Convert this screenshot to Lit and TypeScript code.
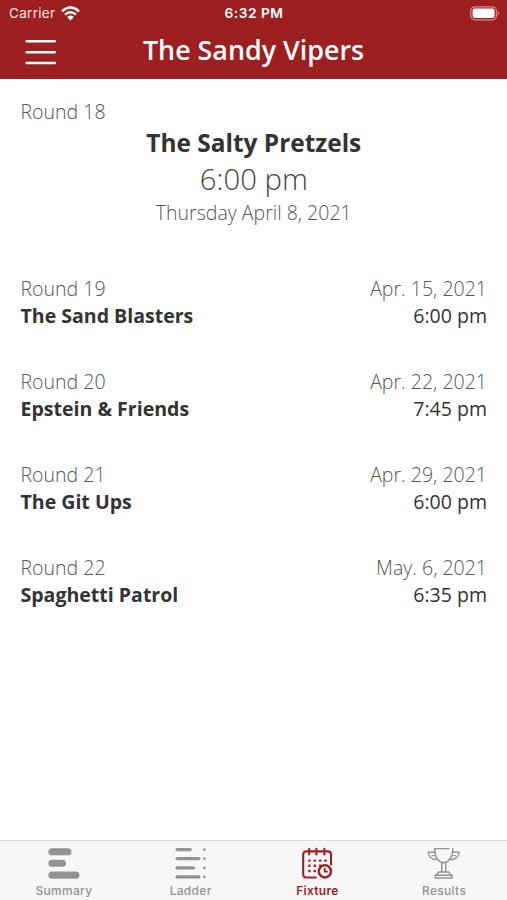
import { LitElement, html, css, svg } from "lit";
import { customElement } from "lit/decorators.js";

const fixtures = [
  { round: "Round 19", team: "The Sand Blasters", date: "Apr. 15, 2021", time: "6:00 pm" },
  { round: "Round 20", team: "Epstein & Friends", date: "Apr. 22, 2021", time: "7:45 pm" },
  { round: "Round 21", team: "The Git Ups", date: "Apr. 29, 2021", time: "6:00 pm" },
  { round: "Round 22", team: "Spaghetti Patrol", date: "May. 6, 2021", time: "6:35 pm" },
];

const tabs = [
  {
    label: "Summary",
    icon: svg`<g fill="currentColor">
      <rect x="5.4" y="4.2" width="23" height="7" rx="3.5"/>
      <rect x="5.4" y="15.7" width="17.5" height="7" rx="3.5"/>
      <rect x="5.4" y="27.5" width="31" height="7.2" rx="3.5"/></g>`,
  },
  {
    label: "Ladder",
    icon: svg`<g fill="none" stroke="currentColor" stroke-width="3.1" stroke-linecap="round">
      <path d="M7 5.6H20.3M7 14.6H29M7 23.9H23.6M7 32.9H29"/>
      <path stroke-width="2.7" d="M34.4 5.6h.01M34.4 14.6h.01M34.4 23.9h.01M34.4 32.9h.01"/></g>`,
  },
  {
    label: "Fixture",
    active: true,
    icon: svg`<g fill="none" stroke="currentColor" stroke-width="2.1" stroke-linecap="round" stroke-linejoin="round">
      <path d="M18.8 33.5H9.2Q6.2 33.5 6.2 30.5V10.4Q6.2 7.4 9.2 7.4H31Q34 7.4 34 10.4V20.4"/>
      <path d="M12.2 4.8V10.4M19.4 4.8V10.4M27.4 4.8V10.4"/>
      <circle cx="27.9" cy="27.4" r="6.1" stroke-width="2.5"/>
      <path stroke-width="1.8" d="M27.7 24.6V27.7H30.1"/></g>
      <g fill="currentColor">${[
        [11.2, 15.4], [16.6, 15.4], [22, 15.4], [27.4, 15.4],
        [11.2, 20.6], [16.6, 20.6], [22, 20.6],
        [11.2, 25.8], [16.6, 25.8],
      ].map(([x, y]) => svg`<rect x=${x} y=${y} width="2.4" height="2.4" rx=".5"/>`)}</g>`,
  },
  {
    label: "Results",
    icon: svg`<g transform="translate(-.7 0)" fill="none" stroke="currentColor" stroke-width="1.4" stroke-linecap="round" stroke-linejoin="round">
      <path d="M25.6 4.6H11.4Q11.2 17.4 20.3 18.8Q29.6 17.4 29.4 4.6"/>
      <path d="M11.3 8.3H4.9Q5.5 14.9 12.8 15.7M10.6 11.6H9M29.4 8.3H35.9Q35.3 14.9 28 15.7M30.3 11.6H32"/>
      <path d="M18.4 18.8V28M22.4 18.8V28M15 28H25.8Q26.2 30.7 28.9 31.2V34H11.9V31.2Q14.7 30.7 15 28ZM12.4 31.3H28.4"/></g>`,
  },
];

@customElement("app-root")
export class AppRoot extends LitElement {
  static styles = css`
    :host {
      display: flex; flex-direction: column; height: 900px; overflow: hidden;
      background: #fff; color: #333; font-family: "Open Sans", sans-serif;
    }
    header { height: 79px; background: #9e1f1f; color: #fff; box-sizing: border-box; }
    .status {
      display: grid; grid-template-columns: 1fr auto 1fr; align-items: center;
      height: 27px; padding: 0 7px 0 8px; font: 500 13.5px/27px Inter, sans-serif;
    }
    .carrier { display: flex; align-items: center; gap: 6px; padding-left: 1px; font-weight: 400; color: #ffe9e5; letter-spacing: .3px; }
    .clock { font-weight: 600; font-size: 13.7px; letter-spacing: .55px; }
    .battery { justify-self: end; display: block; }
    .bar { display: grid; grid-template-columns: 56px 1fr 56px; align-items: center; height: 46px; }
    .menu { display: block; margin: 3px 0 0 25px; }
    h1 { font-size: 26.85px; font-weight: 600; text-align: center; margin: 0; line-height: 46px; white-space: nowrap; }
    main { flex: 1; padding: 20.3px 20px 0 20.5px; font-size: 19.55px; line-height: 26.7px; font-weight: 300; }
    .muted { color: #555; }
    .next { text-align: center; margin-bottom: 49px; }
    .rival { font-size: 24.45px; line-height: 33.4px; font-weight: 700; }
    .kickoff { font-size: 29.3px; line-height: 41px; color: #444; }
    .match { margin-bottom: 39.5px; }
    .row { display: flex; justify-content: space-between; }
    .team { font-weight: 700; }
    .time { font-weight: 400; }
    nav {
      display: grid; grid-template-columns: repeat(4, 1fr); height: 60px; box-sizing: border-box;
      background: #f7f7f7; border-top: 1px solid #d9d9d9;
    }
    .tab {
      display: flex; flex-direction: column; align-items: center; padding-top: 3px; color: #929292;
      font: 500 12px/16px Inter, sans-serif; letter-spacing: .3px;
    }
    .tab span { padding-left: 1px; }
    .tab svg { display: block; height: 39px; flex: none; }
    .active { color: #9e1f24; font-weight: 600; }
  `;

  render() {
    return html`
      <header>
        <div class="status">
          <div class="carrier"><span>Carrier</span>
            <svg width="19" height="15" viewBox="0 0 19 15" fill="none" stroke="#fff" stroke-width="2.4">
              <path d="M1 5.3Q9.5-2.3 18 5.3M4 8.6Q9.5 3.8 15 8.6"/>
              <path fill="#fff" stroke="none" d="M6.2 11Q9.5 8.2 12.8 11L9.5 14.4Z"/>
            </svg>
          </div>
          <span class="clock">6:32 PM</span>
          <svg class="battery" width="30" height="15" viewBox="0 0 30 15">
            <rect x=".8" y=".8" width="25.6" height="13" rx="4" fill="none" stroke="#d68d8b" stroke-width="1.2"/>
            <rect x="2.6" y="2.6" width="22" height="9.4" rx="2.2" fill="#fff"/>
            <path d="M27.8 5Q30.6 7.3 27.8 9.6Z" fill="#d68d8b"/>
          </svg>
        </div>
        <div class="bar">
          <svg class="menu" width="32" height="28" viewBox="0 0 32 28" stroke="#fff" stroke-width="2.4" stroke-linecap="round">
            <path d="M1.6 3.2H29.8M1.6 14.2H29.8M1.6 25H29.8"/>
          </svg>
          <h1>The Sandy Vipers</h1>
        </div>
      </header>
      <main>
        <div class="muted">Round 18</div>
        <div class="next">
          <div class="rival">The Salty Pretzels</div>
          <div class="kickoff">6:00 pm</div>
          <div class="muted">Thursday April 8, 2021</div>
        </div>
        ${fixtures.map((f) => html`
          <div class="match">
            <div class="row muted"><span>${f.round}</span><span>${f.date}</span></div>
            <div class="row"><span class="team">${f.team}</span><span class="time">${f.time}</span></div>
          </div>`)}
      </main>
      <nav>
        ${tabs.map((t) => html`
          <div class="tab ${t.active ? "active" : ""}">
            <svg width="40" height="39" viewBox="0 0 40 39">${t.icon}</svg>
            <span>${t.label}</span>
          </div>`)}
      </nav>`;
  }
}
